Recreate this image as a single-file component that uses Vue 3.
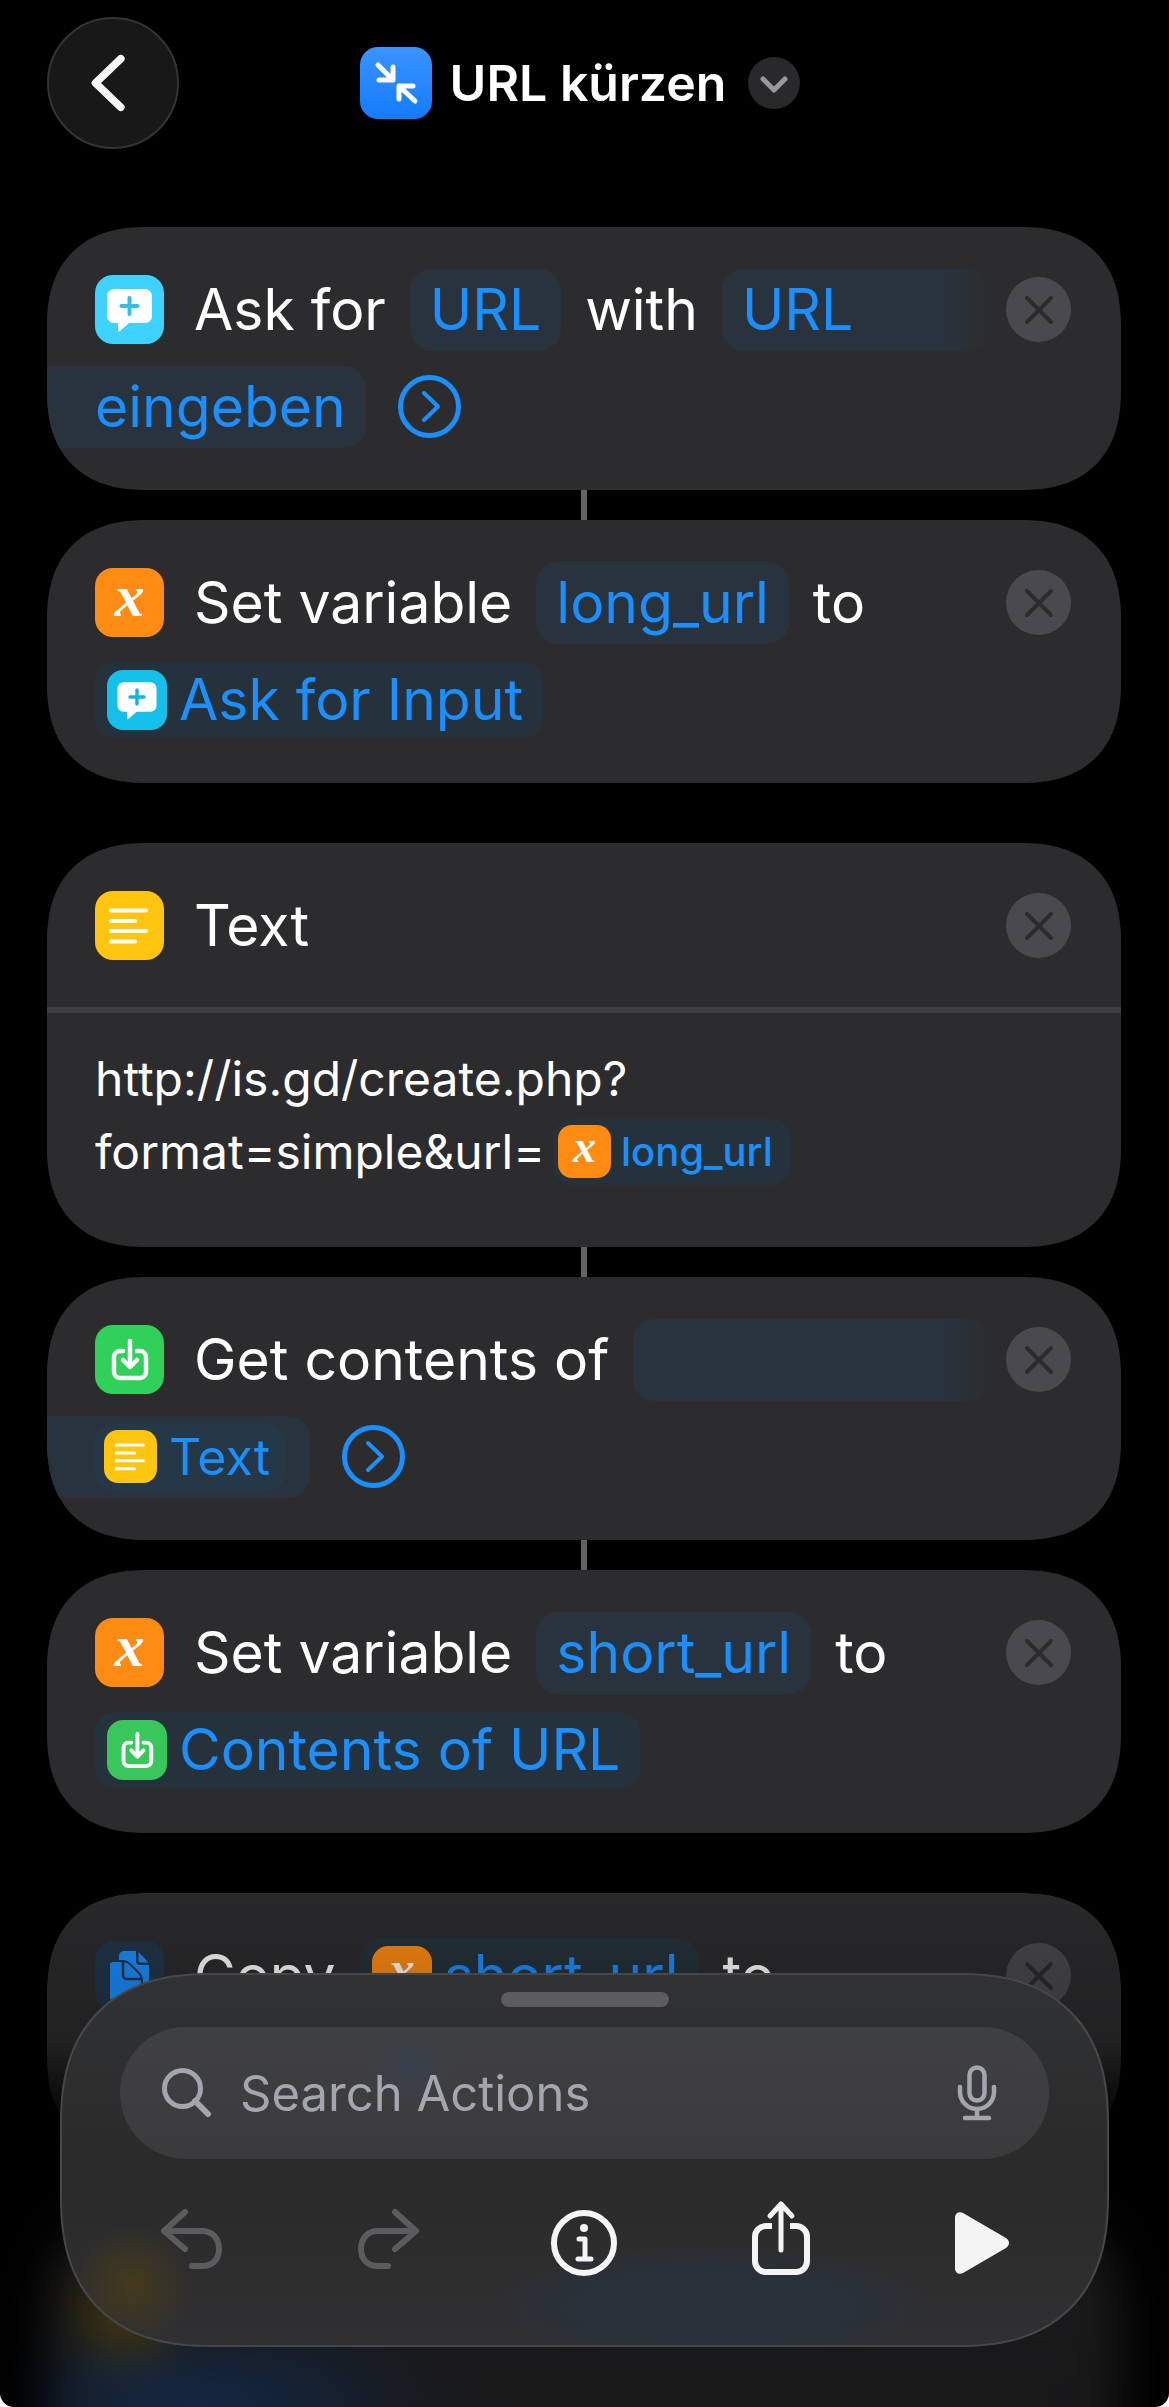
<template>
  <div class="editor">
    <svg class="sprite" aria-hidden="true">
      <symbol id="glyph-ask" viewBox="0 0 69 69">
        <path d="M19 14h31a7 7 0 0 1 7 7v20a7 7 0 0 1-7 7H34l-9 8c-1 1-2 .500-2-1v-7h-4a7 7 0 0 1-7-7V21a7 7 0 0 1 7-7z" fill="#fff" />
        <path d="M34.500 23v16M26.500 31h16" stroke="currentColor" stroke-width="4" stroke-linecap="round" />
      </symbol>
      <symbol id="glyph-text" viewBox="0 0 69 69">
        <path d="M16 19.500h35M16 30h24M16 40h35M16 50.500h24" stroke="#fff" stroke-width="4" stroke-linecap="round" />
      </symbol>
      <symbol id="glyph-download" viewBox="0 0 69 69">
        <path d="M28 26h-3a6 6 0 0 0-6 6v15a6 6 0 0 0 6 6h20a6 6 0 0 0 6-6V32a6 6 0 0 0-6-6h-3M35 16v25M28 35l7 7 7-7" fill="none" stroke="#fff" stroke-width="4.500" stroke-linecap="round" stroke-linejoin="round" />
      </symbol>
      <symbol id="glyph-copy" viewBox="0 0 69 69">
        <path d="M24 15a5 5 0 0 1 5-5h12v10a4 4 0 0 0 4 4h9v23a4 4 0 0 1-4 4H24z" fill="#1a8fff" />
        <path d="M43.500 11l10 10.500h-8a2 2 0 0 1-2-2z" fill="#1a8fff" />
        <path d="M14 24a4 4 0 0 1 4-4h10c4 0 6 2 8 4l8 8c2 2 3 4 3 8v16a5 5 0 0 1-5 5H19a5 5 0 0 1-5-5z" fill="#1a8fff" stroke="#22364b" stroke-width="2" />
        <path d="M28 21v13a4 4 0 0 0 4 4h14" fill="none" stroke="#22364b" stroke-width="2.500" />
      </symbol>
      <symbol id="glyph-open" viewBox="0 0 63 63">
        <circle cx="31.500" cy="31.500" r="29" fill="none" stroke="currentColor" stroke-width="5" />
        <path d="M26 18l14 13.500L26 45" fill="none" stroke="currentColor" stroke-width="4" stroke-linecap="round" stroke-linejoin="round" />
      </symbol>
      <symbol id="glyph-close" viewBox="0 0 65 65">
        <path d="M21 21l24 24M45 21L21 45" stroke="currentColor" stroke-width="4" stroke-linecap="round" />
      </symbol>
    </svg>

    <header class="topbar">
      <button class="back" type="button" aria-label="Back">
        <svg viewBox="0 0 132 132" fill="none">
          <path d="M74 41L48 66l26 25" stroke="#f5f5f5" stroke-width="8" stroke-linecap="round" stroke-linejoin="round" />
        </svg>
      </button>
      <div class="title">
        <svg class="app-icon" viewBox="0 0 72 72" fill="none" aria-hidden="true">
          <path d="M18 18l15 15M33 20v13H19M55 54L39 39M39 52V39h14" stroke="#fff" stroke-width="5" stroke-linecap="round" stroke-linejoin="round" />
        </svg>
        <h1>URL kürzen</h1>
        <button class="title-menu" type="button" aria-label="Shortcut options">
          <svg viewBox="0 0 52 52" fill="none">
            <path d="M15 22l11 11 11-11" stroke="#98989d" stroke-width="5" stroke-linecap="round" stroke-linejoin="round" />
          </svg>
        </button>
      </div>
    </header>

    <main class="actions">
      <section class="card">
        <div class="line">
          <svg class="tile ask"><use href="#glyph-ask" /></svg>
          <span>Ask for</span>
          <button class="chip" type="button">URL</button>
          <span>with</span>
          <button class="chip runs-out" type="button">URL</button>
          <button class="remove" type="button" aria-label="Remove action"><svg><use href="#glyph-close" /></svg></button>
        </div>
        <div class="line">
          <button class="chip runs-in" type="button">eingeben</button>
          <button class="more" type="button" aria-label="Show more"><svg><use href="#glyph-open" /></svg></button>
        </div>
      </section>

      <div class="connector"></div>

      <section class="card">
        <div class="line">
          <span class="tile variable">x</span>
          <span>Set variable</span>
          <button class="chip" type="button">long_url</button>
          <span>to</span>
          <button class="remove" type="button" aria-label="Remove action"><svg><use href="#glyph-close" /></svg></button>
        </div>
        <div class="line">
          <button class="token" type="button">
            <svg class="tile ask-token"><use href="#glyph-ask" /></svg>Ask for Input
          </button>
        </div>
      </section>

      <section class="card separate">
        <div class="line">
          <svg class="tile text"><use href="#glyph-text" /></svg>
          <span>Text</span>
          <button class="remove" type="button" aria-label="Remove action"><svg><use href="#glyph-close" /></svg></button>
        </div>
        <div class="text-body">
          <div class="text-line">http://is.gd/create.php?</div>
          <div class="text-line">
            format=simple&amp;url=
            <button class="token inline" type="button">
              <span class="tile variable">x</span>long_url
            </button>
          </div>
        </div>
      </section>

      <div class="connector"></div>

      <section class="card">
        <div class="line">
          <svg class="tile download"><use href="#glyph-download" /></svg>
          <span>Get contents of</span>
          <span class="chip runs-out"></span>
          <button class="remove" type="button" aria-label="Remove action"><svg><use href="#glyph-close" /></svg></button>
        </div>
        <div class="line">
          <div class="chip runs-in">
            <button class="token nested" type="button">
              <svg class="tile text"><use href="#glyph-text" /></svg>Text
            </button>
          </div>
          <button class="more" type="button" aria-label="Show more"><svg><use href="#glyph-open" /></svg></button>
        </div>
      </section>

      <div class="connector"></div>

      <section class="card">
        <div class="line">
          <span class="tile variable">x</span>
          <span>Set variable</span>
          <button class="chip" type="button">short_url</button>
          <span>to</span>
          <button class="remove" type="button" aria-label="Remove action"><svg><use href="#glyph-close" /></svg></button>
        </div>
        <div class="line">
          <button class="token" type="button">
            <svg class="tile download-token"><use href="#glyph-download" /></svg>Contents of URL
          </button>
        </div>
      </section>

      <section class="card separate sinking">
        <div class="line">
          <svg class="tile copy"><use href="#glyph-copy" /></svg>
          <span>Copy</span>
          <button class="token" type="button">
            <span class="tile variable">x</span>short_url
          </button>
          <span>to</span>
          <button class="remove" type="button" aria-label="Remove action"><svg><use href="#glyph-close" /></svg></button>
        </div>
        <div class="line"></div>
      </section>

      <div class="card separate out-of-focus"></div>
    </main>

    <footer class="panel">
      <div class="grabber"></div>
      <label class="search">
        <svg class="search-icon" viewBox="0 0 50 50" fill="none" aria-hidden="true">
          <circle cx="20.500" cy="20.500" r="18" stroke="currentColor" stroke-width="5" />
          <path d="M33 33l13 13" stroke="currentColor" stroke-width="6" stroke-linecap="round" />
        </svg>
        <input v-model="query" type="text" placeholder="Search Actions" aria-label="Search Actions" />
        <button class="mic" type="button" aria-label="Dictate">
          <svg viewBox="0 0 40 56" fill="none">
            <rect x="12.500" y="2.500" width="15" height="33" rx="7.500" stroke="currentColor" stroke-width="4.500" />
            <path d="M3 22v5a17 17 0 0 0 34 0v-5M20 44v9M8 53h24" stroke="currentColor" stroke-width="4.500" stroke-linecap="round" />
          </svg>
        </button>
      </label>
      <nav class="toolbar">
        <button type="button" aria-label="Undo" disabled>
          <svg viewBox="0 0 76 76" fill="none">
            <path d="M31 8L10 27l21 18M10 27h38c10 0 17 7 17 18s-7 17-17 17H38" stroke="currentColor" stroke-width="6" stroke-linecap="round" stroke-linejoin="round" />
          </svg>
        </button>
        <button type="button" aria-label="Redo" disabled>
          <svg viewBox="0 0 76 76" fill="none">
            <path d="M45 8l21 19-21 18M66 27H28c-10 0-17 7-17 18s7 17 17 17h10" stroke="currentColor" stroke-width="6" stroke-linecap="round" stroke-linejoin="round" />
          </svg>
        </button>
        <button type="button" aria-label="Details">
          <svg viewBox="0 0 76 76" fill="none">
            <circle cx="38" cy="39" r="30" stroke="currentColor" stroke-width="6" />
            <circle cx="38" cy="24" r="4" fill="currentColor" />
            <path d="M33 35h6v19M32 55h13" stroke="currentColor" stroke-width="5" stroke-linecap="round" stroke-linejoin="round" />
          </svg>
        </button>
        <button type="button" aria-label="Share">
          <svg viewBox="0 0 76 76" fill="none">
            <path d="M29 22h-6a11 11 0 0 0-11 11v24a11 11 0 0 0 11 11h30a11 11 0 0 0 11-11V33a11 11 0 0 0-11-11h-6" stroke="currentColor" stroke-width="6" />
            <path d="M38 46V0M27 12L38 0l11 12" stroke="currentColor" stroke-width="5" stroke-linecap="round" stroke-linejoin="round" />
          </svg>
        </button>
        <button type="button" aria-label="Run">
          <svg viewBox="0 0 76 76">
            <path d="M16 14v50c0 5 4 7 8 5l43-25c4-3 4-7 0-10L24 9c-4-2-8 0-8 5z" fill="currentColor" />
          </svg>
        </button>
      </nav>
    </footer>
  </div>
</template>

<script setup>
import { ref } from 'vue';

const query = ref('');
</script>

<style>
html {
  background: #fff;
}

body {
  margin: 0;
}
</style>

<style scoped>
.editor {
  position: relative;
  height: 100vh;
  overflow: hidden;
  background: #000;
  color: #fff;
  font-family: Inter, "Liberation Sans", sans-serif;
  border-radius: 0 0 14px 14px;
}

.sprite {
  position: absolute;
  width: 0;
  height: 0;
}

button {
  margin: 0;
  padding: 0;
  border: 0;
  background: none;
  color: inherit;
  font: inherit;
  white-space: nowrap;
}

button svg {
  display: block;
}

.topbar {
  display: grid;
  grid-template-columns: 1fr auto 1fr;
  align-items: center;
  padding: 17px 56px 0 47px;
}

.back {
  width: 132px;
  height: 132px;
  box-sizing: border-box;
  border: 2px solid #343434;
  border-radius: 50%;
  background: #181818;
}

.title {
  display: flex;
  align-items: center;
}

.app-icon {
  width: 72px;
  height: 72px;
  margin-right: 18px;
  border-radius: 18px;
  background: linear-gradient(#3a94ff, #147bff);
}

h1 {
  margin: 0;
  font-size: 50px;
  line-height: 60px;
  font-weight: 600;
}

.title-menu {
  width: 52px;
  height: 52px;
  margin-left: 22px;
  border-radius: 50%;
  background: #29292c;
}

.actions {
  padding: 78px 48px 0 47px;
}

.card {
  padding: 34px 0 35px;
  border-radius: 100px;
  corner-shape: superellipse(1.25);
  background: #2c2c2e;
  overflow: hidden;
  font-size: 57px;
  font-weight: 430;
}

.separate {
  margin-top: 60px;
}

.connector {
  width: 6px;
  height: 30px;
  margin: 0 auto;
  background: #636366;
}

.line {
  display: flex;
  align-items: center;
  gap: 24px;
  height: 97px;
  padding: 0 50px 0 48px;
  white-space: nowrap;
}

.tile {
  flex: none;
  width: 69px;
  height: 69px;
  border-radius: 18px;
}

.line > .tile {
  margin-right: 6px;
}

.ask {
  background: #3dd2ff;
  color: #32bdea;
}

.ask-token {
  background: #14c0ea;
  color: #14b4dc;
}

.variable {
  background: #ff8b12;
  color: #fff;
  font: italic 700 60px/56px "Liberation Serif", serif;
  text-align: center;
}

.text {
  background: #ffc50f;
}

.download {
  background: #30d158;
}

.download-token {
  background: #38c75a;
}

.copy {
  background: #22364b;
}

.chip {
  height: 82px;
  padding: 0 20px;
  border-radius: 22px;
  background: #29333d;
  color: #1a8fff;
}

/* a value that wraps: first half fades out on the right, second half enters from the card edge */
.runs-out {
  flex: 1;
  margin-right: -8px;
  text-align: left;
  background: linear-gradient(to right, #29333d calc(100% - 44px), #2c2c2e);
}

.runs-in {
  display: flex;
  align-items: center;
  margin-left: -48px;
  padding-left: 48px;
  border-radius: 0 22px 22px 0;
}

.token {
  display: flex;
  align-items: center;
  gap: 12px;
  height: 76px;
  padding: 0 20px 0 12px;
  border-radius: 20px;
  background: #26323b;
  color: #1a8fff;
}

.token .tile {
  width: 60px;
  height: 60px;
  border-radius: 16px;
}

.token .variable {
  font-size: 52px;
  line-height: 48px;
}

.token.inline {
  gap: 10px;
  height: 66px;
  padding: 0 18px 0 5px;
  font-size: 40px;
  font-weight: 500;
}

.token.nested {
  height: 68px;
  margin-right: 4px;
  padding: 0 16px 0 9px;
  background: #243848;
  font-size: 50px;
}

.inline .tile,
.nested .tile {
  width: 53px;
  height: 53px;
  border-radius: 14px;
}

.inline .variable {
  font-size: 46px;
  line-height: 43px;
}

.more {
  margin-left: 8px;
  color: #1a8fff;
}

.more svg {
  width: 63px;
  height: 63px;
}

.remove {
  margin-left: auto;
  border-radius: 50%;
  background: #4a4a4e;
  color: #2c2c2e;
}

.remove svg {
  width: 65px;
  height: 65px;
}

.text-body {
  margin-top: 33px;
  padding: 29px 48px 24px;
  border-top: 6px solid #3e3e41;
  font-size: 48px;
  font-weight: 400;
}

.text-line {
  display: flex;
  align-items: center;
  gap: 8px;
  height: 73px;
}

/* the last cards dim and dissolve beneath the floating panel */
.sinking {
  position: relative;
  mask-image: linear-gradient(#000 150px, transparent 240px);
}

.sinking::after {
  content: "";
  position: absolute;
  inset: 0;
  background: linear-gradient(rgba(0, 0, 0, 0.08), rgba(0, 0, 0, 0.2) 90px, rgba(0, 0, 0, 0.35));
}

.out-of-focus {
  height: 300px;
  filter: blur(24px);
  background:
    radial-gradient(circle at 80px 95px, #5c4505, transparent 60px),
    radial-gradient(ellipse 260px 90px at 150px 190px, #11294a, transparent),
    linear-gradient(#1b1b1c, #161618);
}

.panel {
  position: absolute;
  right: 60px;
  bottom: 60px;
  left: 60px;
  box-sizing: border-box;
  padding: 17px 32px 44px;
  border: 2px solid #464749;
  border-radius: 150px;
  corner-shape: superellipse(1.25);
  background:
    radial-gradient(circle at 70px 310px, rgba(84, 66, 16, 0.6), transparent 60px),
    radial-gradient(ellipse 220px 60px at 650px 330px, rgba(40, 49, 60, 0.9) 60%, transparent),
    linear-gradient(#313233, #2f3031 50px, #2a2a2b 200px, #303032);
}

.grabber {
  width: 168px;
  height: 15px;
  margin: 0 auto 20px;
  border-radius: 8px;
  background: #5c5c5e;
}

.search {
  display: flex;
  align-items: center;
  height: 132px;
  margin: 0 26px 24px;
  padding: 0 52px 0 42px;
  box-sizing: border-box;
  border-radius: 66px;
  background:
    radial-gradient(ellipse 44px 44px at 290px 40px, rgba(56, 66, 84, 0.7), transparent),
    linear-gradient(#3f4041, #3b3b3d);
  color: #a5a5ad;
}

.search-icon {
  flex: none;
  width: 50px;
  height: 50px;
  margin-right: 28px;
}

.search input {
  flex: 1;
  min-width: 0;
  padding: 0;
  border: 0;
  outline: none;
  background: none;
  color: #fff;
  font: inherit;
  font-size: 49px;
}

.search input::placeholder {
  color: #a5a5ad;
  opacity: 1;
}

.mic svg {
  width: 40px;
  height: 56px;
}

.toolbar {
  display: grid;
  grid-template-columns: repeat(5, 1fr);
  height: 118px;
}

.toolbar button {
  display: grid;
  place-items: center;
  color: #f4f4f4;
}

.toolbar button:disabled {
  color: #5c5c5e;
}

.toolbar svg {
  width: 76px;
  height: 76px;
  overflow: visible;
}
</style>
